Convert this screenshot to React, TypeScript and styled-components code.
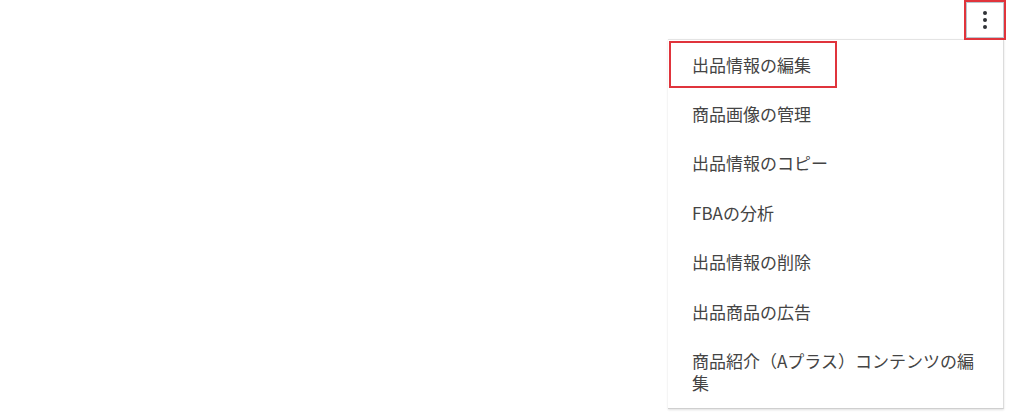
import React from "react";
import styled, { createGlobalStyle } from "styled-components";

const Global = createGlobalStyle`
  html, body { margin: 0; padding: 0; background: #ffffff; }
  body { font-family: "Noto Sans CJK JP", "Noto Sans", sans-serif; }
`;

const Page = styled.div`
  width: 1024px;
  height: 412px;
  display: flex;
  justify-content: flex-end;
  overflow: hidden;
`;

const Anchor = styled.div`
  position: relative;
  width: 336px;
  margin-right: 20px;
  display: flex;
  flex-direction: column;
  align-items: flex-end;
`;

const KebabButton = styled.button`
  position: relative;
  width: 42px;
  height: 40px;
  margin-right: -2px;
  padding: 0;
  box-sizing: border-box;
  background: #ffffff;
  border: 2px solid #e0343c;
  display: flex;
  flex-direction: column;
  align-items: center;
  justify-content: center;
  gap: 3px;
  cursor: pointer;
  z-index: 2;
  &::before {
    content: "";
    position: absolute;
    inset: 0;
    border: 1px solid #b9c6cf;
  }
`;

const Dot = styled.span`
  width: 4px;
  height: 4px;
  border-radius: 50%;
  background: #2f3236;
`;

const Menu = styled.ul`
  position: absolute;
  top: 39px;
  left: 0;
  width: 336px;
  margin: 0;
  padding: 0;
  box-sizing: border-box;
  list-style: none;
  background: #ffffff;
  border-top: 1px solid #e4e4e4;
  border-right: 1px solid #dcdcdc;
  border-bottom: 1px solid #cfcfcf;
  box-shadow: 0 1px 2px rgba(0, 0, 0, 0.12);
  z-index: 1;
`;

const Item = styled.li<{ $marked?: boolean }>`
  position: relative;
  padding: 13.7px 24px;
  font-size: 17px;
  line-height: 22px;
  color: #444444;
  cursor: pointer;
  &::after {
    content: "";
    display: ${(p) => (p.$marked ? "block" : "none")};
    position: absolute;
    left: 1px;
    top: 1px;
    width: 168px;
    height: 47px;
    box-sizing: border-box;
    border: 2px solid #e0343c;
  }
`;

const items = [
  "出品情報の編集",
  "商品画像の管理",
  "出品情報のコピー",
  "FBAの分析",
  "出品情報の削除",
  "出品商品の広告",
  "商品紹介（Aプラス）コンテンツの編集",
];

export default function App() {
  return (
    <>
      <Global />
      <Page>
        <Anchor>
          <KebabButton aria-label="more">
            <Dot />
            <Dot />
            <Dot />
          </KebabButton>
          <Menu>
            {items.map((t, i) => (
              <Item key={t} $marked={i === 0}>
                {t}
              </Item>
            ))}
          </Menu>
        </Anchor>
      </Page>
    </>
  );
}
